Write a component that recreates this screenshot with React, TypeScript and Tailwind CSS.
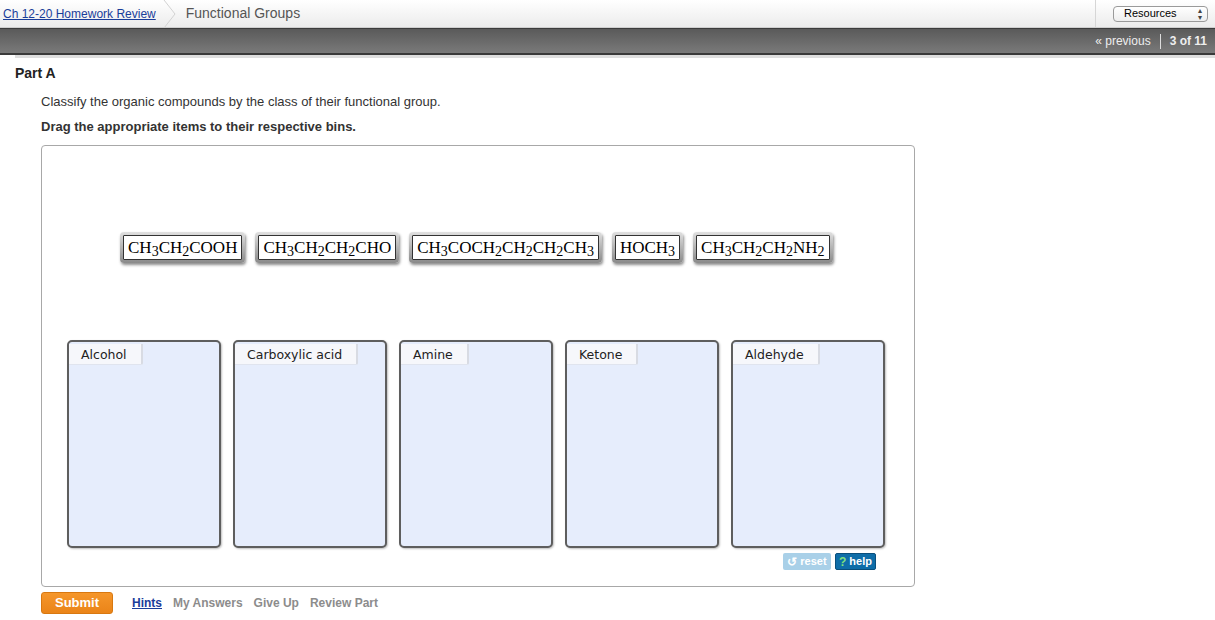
import React from "react";

const chem = (parts: (string | [string])[]) =>
  parts.map((p, i) =>
    typeof p === "string" ? (
      <span key={i}>{p}</span>
    ) : (
      <sub key={i} className="text-[14px] relative top-[4px] align-baseline">
        {p[0]}
      </sub>
    )
  );

const items: (string | [string])[][] = [
  ["CH", ["3"], "CH", ["2"], "COOH"],
  ["CH", ["3"], "CH", ["2"], "CH", ["2"], "CHO"],
  ["CH", ["3"], "COCH", ["2"], "CH", ["2"], "CH", ["2"], "CH", ["3"]],
  ["HOCH", ["3"]],
  ["CH", ["3"], "CH", ["2"], "CH", ["2"], "NH", ["2"]],
];

const bins = ["Alcohol", "Carboxylic acid", "Amine", "Ketone", "Aldehyde"];

export default function App() {
  return (
    <div className="w-[1215px] h-[620px] bg-white font-['Liberation_Sans',Arial,sans-serif] overflow-hidden">
      {/* top breadcrumb bar */}
      <div className="h-[28px] flex items-center bg-gradient-to-b from-white to-[#ececec] border-b border-[#cfcfcf]">
        <a className="ml-[3px] text-[12px] text-[#1a3d9a] underline">Ch 12-20 Homework Review</a>
        <svg width="14" height="28" viewBox="0 0 14 28" className="ml-[7px]">
          <path d="M1 0 L12 14 L1 28" fill="none" stroke="#d2d2d2" strokeWidth="1" />
        </svg>
        <span className="ml-[9px] text-[14px] text-[#555]">Functional Groups</span>
        <div className="ml-auto h-full border-l border-[#d6d6d6]" />
        <div className="ml-[17px] mr-[7px] w-[95px] h-[16px] rounded-[4px] border border-[#9a9a9a] bg-gradient-to-b from-white to-[#eee] flex items-center text-[11px] text-black">
          <span className="ml-[10px]">Resources</span>
          <span className="ml-auto mr-[5px] text-[8px] leading-[7px] flex flex-col text-[#444]">
            <span>▴</span>
            <span>▾</span>
          </span>
        </div>
      </div>
      {/* dark nav bar */}
      <div className="h-[27px] flex items-center justify-end bg-gradient-to-b from-[#5a5a5a] to-[#7a7a7a] border-t border-[#3c3c3c] border-b-2 border-b-[#3a3a3a] text-white text-[12px]">
        <span className="text-[#eee]">« previous</span>
        <span className="mx-[9px] h-[15px] border-l border-[#ddd]" />
        <span className="mr-[8px] font-bold text-[#eee]">3 of 11</span>
      </div>
      <div className="ml-[15px] h-[3px] bg-[#dedede]" />

      <div className="pl-[15px] pt-[5px]">
        <div className="text-[14px] leading-[20px] font-bold text-[#222]">Part A</div>
        <div className="pl-[26px]">
          <p className="mt-[9px] text-[13px] leading-[20px] text-[#333]">
            Classify the organic compounds by the class of their functional group.
          </p>
          <p className="mt-[5px] text-[13px] leading-[20px] font-bold text-[#333]">
            Drag the appropriate items to their respective bins.
          </p>

          <div className="mt-[8px] w-[874px] h-[442px] border border-[#a8a8a8] rounded-[4px] flex flex-col">
            <div className="mt-[86px] flex pl-[78px] gap-[10px]">
              {items.map((it, i) => (
                <div
                  key={i}
                  className="h-[31px] px-[3px] py-[3px] rounded-[4px] bg-gradient-to-b from-[#e0e0e0] to-[#8a8a8a] shadow-[1px_2px_3px_rgba(0,0,0,0.45)]"
                >
                  <div className="h-full px-[4px] bg-white border border-[#333] rounded-[1px] flex items-center font-['Liberation_Serif','Times_New_Roman',serif] text-[17px] text-black leading-none whitespace-nowrap">
                    {chem(it)}
                  </div>
                </div>
              ))}
            </div>

            <div className="mt-[77px] ml-[25px] flex gap-[12px]">
              {bins.map((b) => (
                <div
                  key={b}
                  className="w-[154px] h-[208px] rounded-[5px] border-2 border-[#5e5e5e] bg-[#e6edfc] shadow-[1px_1px_2px_rgba(0,0,0,0.25)] overflow-hidden"
                >
                  <div className="inline-block h-[21px] pl-[12px] pr-[14px] bg-[#f6f7fb] border-r-2 border-b border-r-[#d8dbe3] border-b-[#e0e4ee] rounded-br-[2px] font-['DejaVu_Sans',Verdana,sans-serif] text-[12.5px] leading-[21px] text-[#222]">
                    {b}
                  </div>
                </div>
              ))}
            </div>

            <div className="mt-[5px] mr-[38px] flex justify-end gap-[4px]">
              <div className="h-[17px] w-[48px] rounded-[2px] bg-[#a9d0e8] text-white text-[11px] font-bold flex items-center justify-center gap-[3px]">
                <span className="text-[12px]">↺</span>reset
              </div>
              <div className="h-[17px] w-[41px] rounded-[2px] bg-[#0e6da8] border border-[#0a4f7c] text-white text-[11px] font-bold flex items-center justify-center gap-[3px]">
                <span className="text-[#7fe07f] text-[12px]">?</span>help
              </div>
            </div>
          </div>

          <div className="mt-[5px] flex items-center">
            <div className="w-[72px] h-[22px] rounded-[3px] bg-gradient-to-b from-[#f5962a] to-[#ea8418] border border-[#d87810] text-white text-[13px] font-bold flex items-center justify-center">
              Submit
            </div>
            <a className="ml-[19px] text-[12px] font-bold text-[#1a3d9a] underline">Hints</a>
            <span className="ml-[11px] text-[12px] font-bold text-[#8c8c8c]">My Answers</span>
            <span className="ml-[11px] text-[12px] font-bold text-[#8c8c8c]">Give Up</span>
            <span className="ml-[11px] text-[12px] font-bold text-[#8c8c8c]">Review Part</span>
          </div>
        </div>
      </div>
    </div>
  );
}
